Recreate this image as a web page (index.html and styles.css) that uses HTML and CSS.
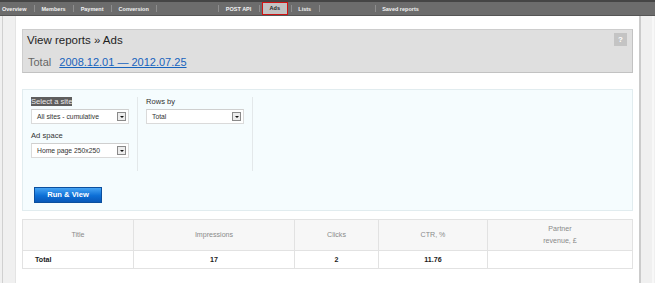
FILE: index.html
```html
<!DOCTYPE html>
<html lang="en">
<head>
    <meta charset="UTF-8">
    <meta name="viewport" content="width=device-width, initial-scale=1.0">
    <title>View reports » Ads</title>
    <link rel="stylesheet" href="styles.css">
</head>
<body>
    <!-- top menu -->
    <ul class="nav">
        <li class="first"><a href="#">Overview</a></li>
        <li><a href="#">Members</a></li>
        <li><a href="#">Payment</a></li>
        <li><a href="#">Conversion</a></li>
        <li class="gap1"></li>
        <li><a href="#">POST API</a></li>
        <li class="on"><a href="#">Ads</a></li>
        <li><a href="#">Lists</a></li>
        <li class="gap2"></li>
        <li class="last"><a href="#">Saved reports</a></li>
    </ul>

    <div class="layout">
        <div class="side_l"></div>
        <div class="panel">
            <!-- title -->
            <div class="head">
                <div class="head_row">
                    <h1>View reports » Ads</h1>
                    <a href="#" class="help">?</a>
                </div>
                <p class="period">Total <a href="#">2008.12.01 — 2012.07.25</a></p>
            </div>

            <!-- filters -->
            <div class="filter">
                <div class="cols">
                    <div class="col">
                        <label class="sel_label">Select a site</label>
                        <div class="select"><span>All sites - cumulative</span><i class="arr"></i></div>
                        <label>Ad space</label>
                        <div class="select"><span>Home page 250x250</span><i class="arr"></i></div>
                    </div>
                    <div class="col">
                        <label>Rows by</label>
                        <div class="select"><span>Total</span><i class="arr"></i></div>
                    </div>
                </div>
                <a href="#" class="btn">Run &amp; View</a>
            </div>

            <!-- result -->
            <table class="report">
                <colgroup>
                    <col style="width:111px">
                    <col style="width:161px">
                    <col style="width:84px">
                    <col style="width:109px">
                    <col>
                </colgroup>
                <thead>
                    <tr>
                        <th>Title</th>
                        <th>Impressions</th>
                        <th>Clicks</th>
                        <th>CTR, %</th>
                        <th>Partner<br>revenue, £</th>
                    </tr>
                </thead>
                <tbody>
                    <tr>
                        <td class="name">Total</td>
                        <td>17</td>
                        <td>2</td>
                        <td>11.76</td>
                        <td></td>
                    </tr>
                </tbody>
            </table>
        </div>
        <div class="side_r"></div>
    </div>
</body>
</html>
```

FILE: styles.css
```css
*{
    margin: 0;
    padding: 0;
    box-sizing: border-box;
}
body{
    background-color: #f0f0f0;
    font-family: "Liberation Sans", Arial, sans-serif;
    color: #222;
    height: 283px;
    overflow: hidden;
}
a{
    text-decoration: none;
}

/* top menu */
.nav{
    display: flex;
    list-style: none;
    height: 16px;
    background-color: #6c6c6c;
    border-top: 2px solid #454545;
    border-bottom: 1px solid #555;
}
.nav li{
    display: flex;
    align-items: center;
    padding: 0 7.5px;
    position: relative;
}
.nav li::after{
    content: "";
    position: absolute;
    right: -1px;
    top: 3px;
    width: 1px;
    height: 7px;
    background-color: #8e8e8e;
}
.nav li.first{
    padding-left: 2px;
}
.nav li.last::after{
    display: none;
}
.nav a{
    font-size: 5.5px;
    font-weight: bold;
    color: #f2f2f2;
}
.nav .gap1{
    width: 62px;
    padding: 0;
}
.nav .gap2{
    width: 56px;
    padding: 0;
}
.nav li.on{
    padding: 0 3px 0 3px;
    align-items: flex-end;
}
.nav li.on a{
    display: block;
    height: 13px;
    line-height: 11px;
    padding: 0 6.8px;
    background-color: #c2c2c2;
    border: 1px solid #d11414;
    color: #222;
}

/* page */
.layout{
    display: flex;
    height: 267px;
    padding-left: 2px;
}
.side_l{
    width: 13px;
    border-left: 1px solid #d0d0d0;
}
.panel{
    flex: 1;
    background-color: #fff;
    border-left: 1px solid #e4e4e4;
    border-right: 2px solid #cbcbcb;
    padding: 13px 6px 0;
}
.side_r{
    width: 13px;
    border-right: 2px solid #f8f8f8;
    margin-right: 1px;
}

/* title box */
.head{
    background-color: #dfdfdf;
    border: 1px solid #cdcdcd;
    border-right-color: #c2c2c2;
    border-bottom-color: #c2c2c2;
    height: 44px;
    padding: 2px 5px 0 4px;
}
.head_row{
    display: flex;
    justify-content: space-between;
    align-items: flex-start;
}
.head h1{
    font-size: 11.5px;
    font-weight: normal;
    line-height: 14px;
    color: #1e1e1e;
    margin-top: 1px;
}
.help{
    display: block;
    width: 13px;
    height: 13px;
    line-height: 13px;
    text-align: center;
    margin-top: 1px;
    background-color: #c4c4c4;
    color: #fff;
    font-size: 8px;
    font-weight: bold;
}
.period{
    font-size: 11px;
    line-height: 12px;
    color: #666;
    margin-top: 9px;
    padding-left: 1px;
}
.period a{
    color: #1763bd;
    text-decoration: underline;
    margin-left: 5px;
}

/* filter box */
.filter{
    margin-top: 16px;
    background-color: #f5fcfe;
    border: 1px solid #e1ecef;
    height: 122px;
    padding: 7px 8px 0;
}
.cols{
    display: flex;
}
.col{
    width: 115px;
    height: 74px;
    padding: 0 8px;
    border-right: 1px solid #e3e8ea;
}
.col:first-child{
    width: 107px;
    padding-left: 0;
}
.col label{
    display: block;
    font-size: 7.6px;
    line-height: 9px;
    color: #333;
}
.col .sel_label{
    width: fit-content;
    background-color: #5e5e5e;
    color: #ececec;
}
.select{
    display: flex;
    align-items: center;
    justify-content: space-between;
    width: 98px;
    height: 15px;
    margin: 3px 0 7px;
    padding: 0 2px 0 5px;
    background-color: #fff;
    border: 1px solid #dadada;
    border-top-color: #cfcfcf;
    font-size: 6.8px;
    color: #333;
}
.arr{
    width: 9px;
    height: 9px;
    border: 1px solid #8a8a8a;
    background-color: #ececec;
    position: relative;
}
.arr::after{
    content: "";
    position: absolute;
    left: 2px;
    top: 3px;
    border-left: 2px solid transparent;
    border-right: 2px solid transparent;
    border-top: 2px solid #111;
}
.btn{
    display: block;
    width: 68px;
    height: 16px;
    line-height: 14px;
    margin: 16px 0 0 3px;
    text-align: center;
    font-size: 7.6px;
    font-weight: bold;
    color: #fff;
    background: linear-gradient(#46a4f4, #0d6fd6 55%, #0a58b8);
    border: 1px solid #0b4f9e;
}

/* report table */
.report{
    width: 100%;
    margin-top: 8px;
    border-collapse: collapse;
    table-layout: fixed;
    font-size: 7.1px;
}
.report th,
.report td{
    border: 1px solid #e2e2e2;
    text-align: center;
}
.report th{
    height: 31px;
    background-color: #f7f7f7;
    font-weight: normal;
    color: #8a8a8a;
    line-height: 12px;
}
.report td{
    height: 18px;
    color: #1a1a1a;
    font-weight: bold;
}
.report td.name{
    text-align: left;
    padding-left: 12px;
}
```
